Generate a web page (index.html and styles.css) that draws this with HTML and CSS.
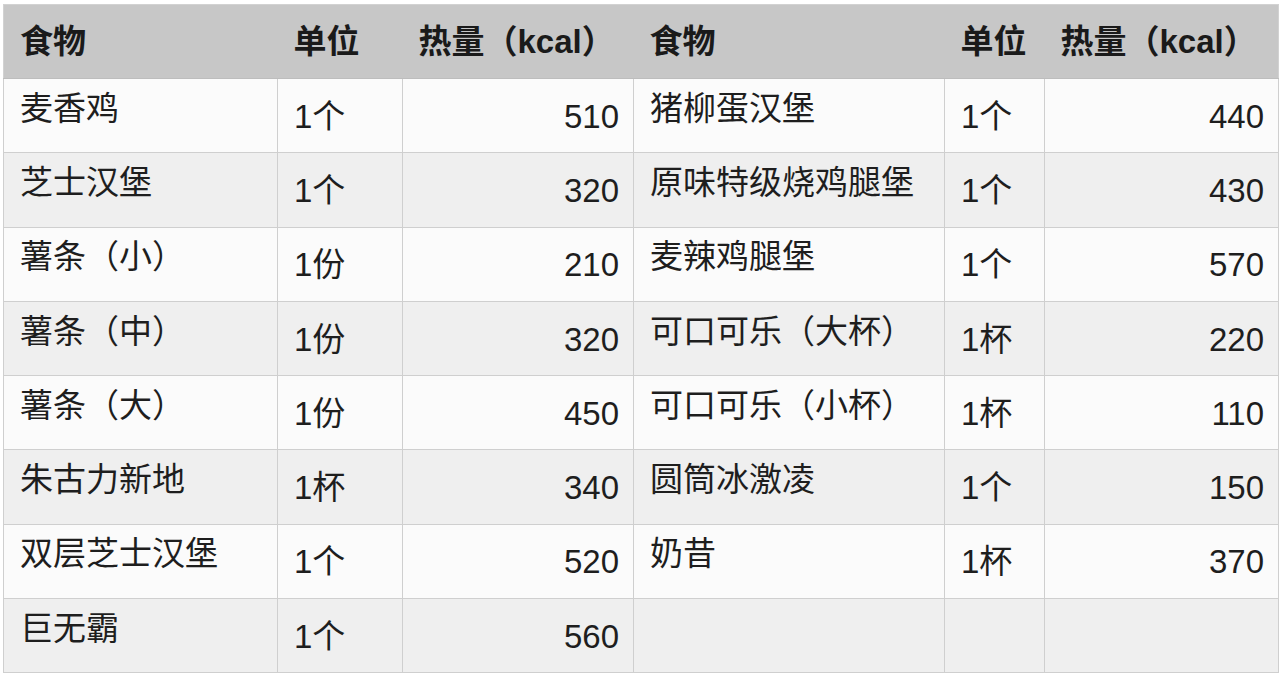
FILE: index.html
```html
<!DOCTYPE html>
<html lang="zh-CN">
<head>
<meta charset="utf-8">
<title>麦当劳食物热量表</title>
<link rel="stylesheet" href="styles.css">
</head>
<body>
<table class="kcal-table">
  <colgroup>
    <col class="c-food-l">
    <col class="c-unit-l">
    <col class="c-kcal-l">
    <col class="c-food-r">
    <col class="c-unit-r">
    <col class="c-kcal-r">
  </colgroup>
  <thead>
    <tr>
      <th>食物</th><th>单位</th><th>热量（kcal）</th>
      <th>食物</th><th>单位</th><th>热量（kcal）</th>
    </tr>
  </thead>
  <tbody>
    <tr><td class="food">麦香鸡</td><td class="unit">1个</td><td class="num">510</td><td class="food">猪柳蛋汉堡</td><td class="unit">1个</td><td class="num">440</td></tr>
    <tr><td class="food">芝士汉堡</td><td class="unit">1个</td><td class="num">320</td><td class="food">原味特级烧鸡腿堡</td><td class="unit">1个</td><td class="num">430</td></tr>
    <tr><td class="food">薯条（小）</td><td class="unit">1份</td><td class="num">210</td><td class="food">麦辣鸡腿堡</td><td class="unit">1个</td><td class="num">570</td></tr>
    <tr><td class="food">薯条（中）</td><td class="unit">1份</td><td class="num">320</td><td class="food">可口可乐（大杯）</td><td class="unit">1杯</td><td class="num">220</td></tr>
    <tr><td class="food">薯条（大）</td><td class="unit">1份</td><td class="num">450</td><td class="food">可口可乐（小杯）</td><td class="unit">1杯</td><td class="num">110</td></tr>
    <tr><td class="food">朱古力新地</td><td class="unit">1杯</td><td class="num">340</td><td class="food">圆筒冰激凌</td><td class="unit">1个</td><td class="num">150</td></tr>
    <tr><td class="food">双层芝士汉堡</td><td class="unit">1个</td><td class="num">520</td><td class="food">奶昔</td><td class="unit">1杯</td><td class="num">370</td></tr>
    <tr><td class="food">巨无霸</td><td class="unit">1个</td><td class="num">560</td><td class="food"></td><td class="unit"></td><td class="num"></td></tr>
  </tbody>
</table>
</body>
</html>
```

FILE: styles.css
```css
html, body {
  margin: 0;
  padding: 0;
  background: #ffffff;
}

body {
  padding: 4px 2px 0 3px;
  font-family: "Liberation Sans", "Noto Sans CJK SC", sans-serif;
  color: #1e1e1e;
}

.kcal-table {
  width: 1275px;
  border-collapse: collapse;
  table-layout: fixed;
  font-size: 33px;
  line-height: 38px;
  border: 1px solid #d2d2d2;
}

.c-food-l { width: 274px; }
.c-unit-l { width: 125px; }
.c-kcal-l { width: 231px; }
.c-food-r { width: 311px; }
.c-unit-r { width: 100px; }
.c-kcal-r { width: 234px; }

.kcal-table thead tr { height: 74px; }
.kcal-table tbody tr { height: 74.3px; }

.kcal-table th {
  padding: 0 0 0 16px;
  background: #c7c7c7;
  text-align: left;
  font-weight: bold;
  color: #1a1a1a;
  border-bottom: 1px solid #bdbdbd;
  white-space: nowrap;
}

.kcal-table td {
  padding: 0 16px;
  border: 1px solid #cfcfcf;
  white-space: nowrap;
  vertical-align: middle;
}

.kcal-table tbody tr:nth-child(odd) td { background: #fbfbfb; }
.kcal-table tbody tr:nth-child(even) td { background: #efefef; }

.kcal-table td.food {
  padding-bottom: 14px;
}

.kcal-table td.unit {
  padding-top: 2px;
}

.kcal-table td.num {
  text-align: right;
  padding-right: 14px;
  padding-top: 2px;
}
```
